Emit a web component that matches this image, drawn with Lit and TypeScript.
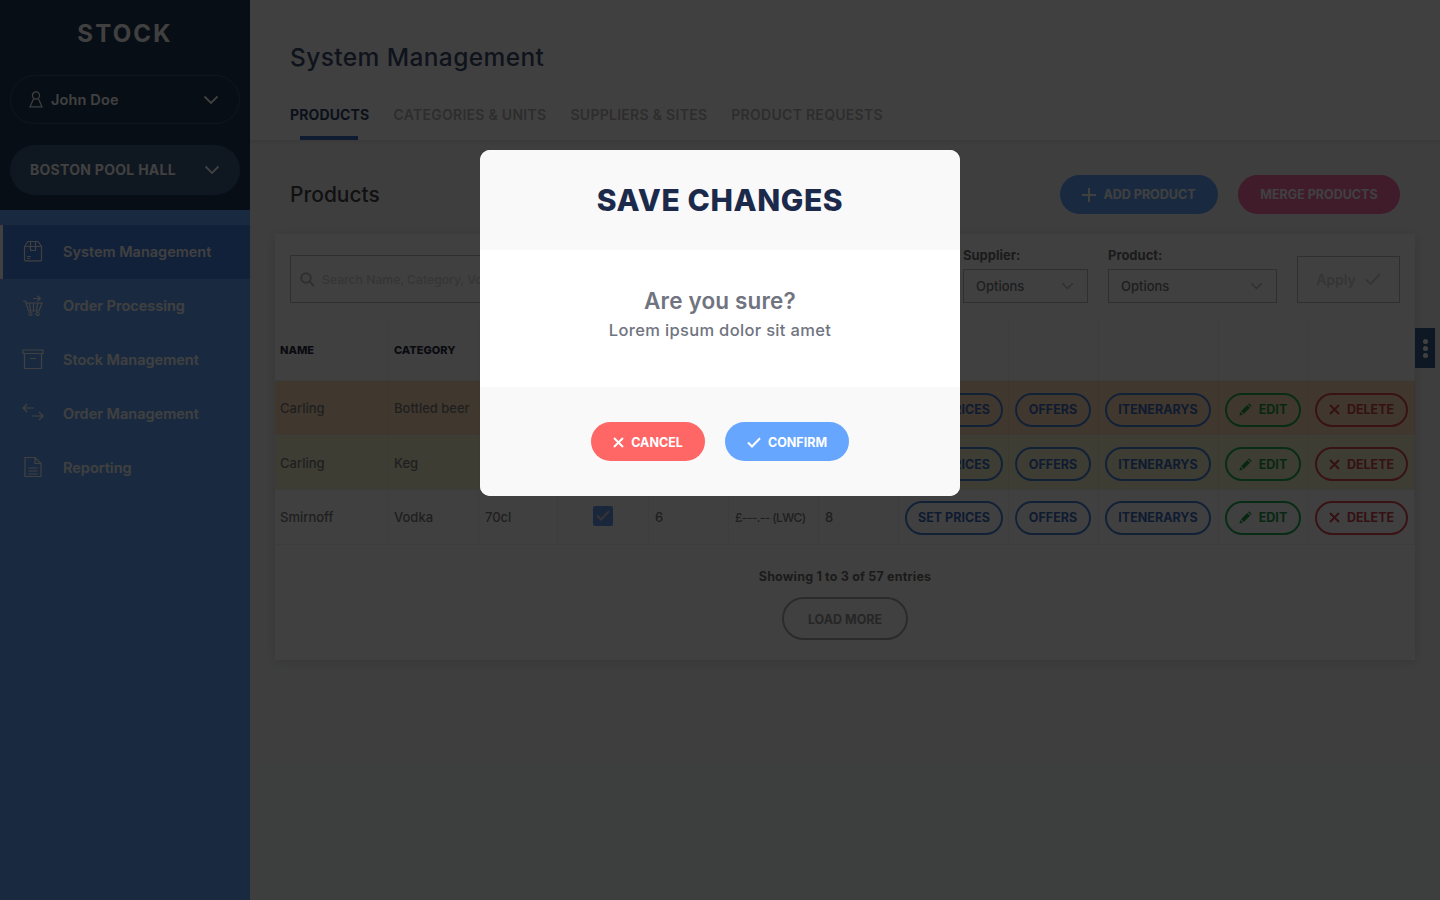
import { LitElement, html, css, svg } from "lit";
import { customElement } from "lit/decorators.js";

const chev = (w = 16) => html`<svg class="chev" width=${w} height=${w * 0.625} viewBox="0 0 16 10" fill="none" stroke="currentColor" stroke-width="1.8"><path d="M1.5 1.5 8 8l6.5-6.5"/></svg>`;
const xIcon = html`<svg class="ic" width="11" height="11" viewBox="0 0 11 11" fill="none" stroke="currentColor" stroke-width="2"><path d="M1 1l9 9M10 1l-9 9"/></svg>`;
const checkIcon = html`<svg class="ic" width="14" height="11" viewBox="0 0 14 11" fill="none" stroke="currentColor" stroke-width="2"><path d="M1 5.5 5 9.5 13 1.2"/></svg>`;
const pencil = html`<svg class="ic" width="13" height="13" viewBox="0 0 13 13" fill="currentColor"><path d="M0.5 12.5 1.2 9 4 11.8zM2 8.2 8.2 2 11 4.8 4.8 11zM9 1.2 10 .3l2.7 2.7-1 1z"/></svg>`;

const navIcons = [
  svg`<path d="M2.5 6.5 6 1.5h10l3.5 5V20a.8.8 0 0 1-.8.8H3.3a.8.8 0 0 1-.8-.8zM2.5 6.5h17M8.5 1.5v9h5v-9M5 16.5h4M5 18.5h3"/>`,
  svg`<path d="M1 7h2.5l3 10h10.5l3-8H4.5M7.5 9.5l1 7.5M11.5 9.5V17M15.5 9.5l-1 7.5M11 4.5h7M15.5 1.8l2.8 2.7-2.8 2.7"/><circle cx="8.5" cy="20" r="1.5"/><circle cx="15.5" cy="20" r="1.5"/>`,
  svg`<path d="M1 2h20v3.5H1zM2.5 6v14.5h17V6M8 10.5h6"/>`,
  svg`<path d="M1 6h11M5 2 1 6l4 4M10 14h11M17 10l4 4-4 4"/>`,
  svg`<path d="M3 1.5h10l6 6V20.5H3zM13 1.5v6h6M6.5 12h9M6.5 15h9M6.5 18h9"/>`,
];
const nav = ["System Management", "Order Processing", "Stock Management", "Order Management", "Reporting"];
const tabs = ["PRODUCTS", "CATEGORIES & UNITS", "SUPPLIERS & SITES", "PRODUCT REQUESTS"];
const heads = ["NAME", "CATEGORY", "VOLUME", "ACTIVE", "STOCK", "PRICE", "SITES"];
const rows = [
  { tone: "orange", name: "Carling", cat: "Bottled beer" },
  { tone: "yellow", name: "Carling", cat: "Keg" },
  { tone: "plain", name: "Smirnoff", cat: "Vodka" },
];

@customElement("app-root")
export class AppRoot extends LitElement {
  static styles = css`
    :host { display: block; width: 1440px; height: 900px; overflow: hidden; position: relative;
      font-family: Inter, "Noto Sans", sans-serif; color: #999; background: #f5f6f9; }
    * { box-sizing: border-box; }
    .app { display: flex; height: 900px; }
    .side { width: 250px; flex: none; background: #66a6ff; color: #fff; }
    .side-top { height: 210px; background: #203853; padding: 21px 10px 0; }
    .brand { text-align: center; font-size: 24px; line-height: 26px; font-weight: 700; letter-spacing: 0.09em; margin-bottom: 28px; color: #fff; }
    .pill { height: 49px; border-radius: 25px; display: flex; align-items: center; justify-content: space-between; }
    .user { border: 1px solid #41597a; padding: 0 20px 0 18px; font-size: 14.5px; font-weight: 600; }
    .user span { display: flex; align-items: center; gap: 8px; letter-spacing: .01em; }
    .site { height: 50px; margin-top: 21px; background: #3f5b82; padding: 0 20px 1px; font-size: 14px; font-weight: 700; letter-spacing: .02em; }
    nav { padding-top: 15px; }
    .nav-item { height: 54px; display: flex; align-items: center; padding: 0 0 2px 22px; gap: 19px; font-size: 14.5px; font-weight: 600; }
    .nav-item.on { background: #4682e6; border-left: 3px solid #fff; padding-left: 19px; }
    .nav-item svg { flex: none; fill: none; stroke: #fff; stroke-width: 1.2; }
    main { flex: 1; min-width: 0; }
    header { height: 140px; background: #fff; padding: 42px 40px 0; box-shadow: 0 2px 4px rgba(0,0,0,.08); }
    h1 { margin: 0; font-size: 24.5px; line-height: 30px; font-weight: 500; color: #3c4c70; letter-spacing: .016em; }
    .tabs { display: flex; gap: 24px; margin-top: 28px; font-size: 14px; font-weight: 600; line-height: 30px; color: #b4b4b4; letter-spacing: .02em; }
    .tab { position: relative; height: 40px; }
    .tab.on { color: #2e4468; font-weight: 700; letter-spacing: .01em; }
    .tab.on::after { content: ""; position: absolute; left: 10px; right: 11px; bottom: 0; height: 4px; background: #3d6cc0; }
    .bar { height: 94px; display: flex; align-items: center; padding: 14px 40px 0; gap: 20px; }
    h2 { margin: 0 auto 0 0; font-size: 21px; font-weight: 500; color: #444; padding-top: 1px; }
    .btn { height: 39px; border-radius: 20px; display: flex; align-items: center; justify-content: center; gap: 7px; padding-top: 1px; font-size: 12.5px; font-weight: 700; color: #fff; }
    .add { width: 158px; background: #65a8ff; }
    .merge { width: 162px; background: #ff6ca8; }
    .card { margin: 0 25px; background: #fff; box-shadow: 0 2px 10px rgba(0,0,0,.12); }
    .filters { height: 85px; display: flex; align-items: flex-end; padding: 0 15px 16px; gap: 20px; font-size: 13px; }
    .search { flex: 1; height: 48px; border: 1px solid #bbb; display: flex; align-items: center; gap: 7px; padding: 0 9px; font-size: 12.2px; color: #d4d4d4; font-weight: 500; white-space: nowrap; overflow: hidden; }
    .field { display: flex; flex-direction: column; gap: 6px; color: #6e6e6e; font-weight: 700; line-height: 15px; }
    .sel { height: 34px; border: 1px solid #bbb; display: flex; align-items: center; justify-content: space-between; padding: 0 13px 0 12px; font-weight: 500; color: #777; }
    .sel .chev { color: #bbb; }
    .s1 { width: 125px; }
    .s2 { width: 169px; }
    .apply { width: 103px; height: 47px; border: 1px solid #bbb; display: flex; align-items: center; justify-content: center; gap: 9px; font-size: 14px; font-weight: 600; color: #d4d4d4; }
    .tr { display: grid; grid-template-columns: 113px 91px 79px 91px 80px 90px 80px 110px 90px 120px 90px 106px; border-bottom: 1px solid #f0f0f0; font-size: 13px; }
    .head { height: 62px; font-size: 11px; font-weight: 800; color: #2b2f45; }
    .r0 { height: 55px; background: #ffdcb8; }
    .r1 { height: 54px; background: #f3f2d0; }
    .r2 { height: 55px; }
    .c { display: flex; align-items: center; padding: 0 5px 0 6px; border-right: 1px solid rgba(0,0,0,.05); font-weight: 500; color: #7c7c7c; white-space: nowrap; min-width: 0; }
    .c:first-child { padding-left: 5px; }
    .head .c { color: #2b2f45; font-weight: 800; }
    .c.cb { justify-content: center; padding: 0 6px; }
    .c.price { font-size: 12px; letter-spacing: -0.6px; }
    .box { width: 20px; height: 20px; border-radius: 2px; background: #6a96f0; color: #d0d0d0; display: flex; align-items: center; justify-content: center; margin-bottom: 3px; }
    .act { height: 34px; border: 2px solid; border-radius: 17px; display: flex; align-items: center; justify-content: center; gap: 7px; font-size: 12.5px; font-weight: 700; margin-top: 3px; }
    .r2 .act { margin-top: 1px; }
    .blue { color: #3f6cc0; border-color: #4c84d8; }
    .green { color: #1e9d4c; border-color: #23b055; }
    .red { color: #d2434f; border-color: #de4a56; }
    .w99 { width: 99px; } .w76 { width: 76px; } .w106 { width: 106px; } .w93 { width: 93px; }
    .foot { height: 115px; display: flex; flex-direction: column; align-items: center; padding-top: 23px; font-size: 12.5px; font-weight: 700; letter-spacing: .015em; color: #6e6e6e; }
    .foot div { line-height: 17px; }
    .more { width: 126px; height: 43px; border: 2px solid #aaa; border-radius: 22px; margin-top: 12px; padding-top: 1px; display: flex; align-items: center; justify-content: center; font-size: 12.5px; font-weight: 700; letter-spacing: 0; color: #999; }
    .handle { position: absolute; left: 1415px; top: 328px; width: 20px; height: 40px; background: #385f8e; display: flex; flex-direction: column; align-items: center; justify-content: center; gap: 2px; }
    .handle i { width: 5px; height: 5px; border-radius: 50%; background: #fff; }
    .overlay { position: absolute; inset: 0; background: rgba(0,0,0,.75); display: flex; justify-content: center; align-items: flex-start; padding-top: 150px; }
    .modal { width: 480px; height: 346px; border-radius: 10px; overflow: hidden; background: #fff; display: flex; flex-direction: column; }
    .m-head { height: 100px; background: #f9f9f9; display: flex; align-items: center; justify-content: center; font-size: 30px; font-weight: 800; letter-spacing: .02em; color: #1b2a4a; }
    .m-body { height: 137px; display: flex; flex-direction: column; align-items: center; padding-top: 36px; color: #6f7480; }
    .m-q { font-size: 22.5px; line-height: 30px; font-weight: 600; letter-spacing: .007em; }
    .m-t { font-size: 16.5px; line-height: 28px; font-weight: 500; letter-spacing: .02em; }
    .m-foot { flex: 1; background: #f9f9f9; display: flex; justify-content: center; gap: 20px; padding-top: 35px; }
    .cancel { width: 114px; background: #ff6666; }
    .confirm { width: 124px; background: #66a6ff; }
  `;

  private actions() {
    return html`
      <div class="c"><div class="act blue w99">SET PRICES</div></div>
      <div class="c"><div class="act blue w76">OFFERS</div></div>
      <div class="c"><div class="act blue w106">ITENERARYS</div></div>
      <div class="c"><div class="act green w76">${pencil}EDIT</div></div>
      <div class="c"><div class="act red w93">${xIcon}DELETE</div></div>`;
  }

  render() {
    return html`
      <div class="app">
        <aside class="side">
          <div class="side-top">
            <div class="brand">STOCK</div>
            <div class="pill user">
              <span><svg width="14" height="17" viewBox="0 0 14 17" fill="none" stroke="currentColor" stroke-width="1.2"><circle cx="7" cy="4.5" r="3.6"/><path d="M4.5 8 1 15.8h12L9.5 8"/></svg>John Doe</span>
              ${chev()}
            </div>
            <div class="pill site"><span>BOSTON POOL HALL</span>${chev()}</div>
          </div>
          <nav>
            ${nav.map((n, i) => html`<div class="nav-item ${i === 0 ? "on" : ""}"><svg width="22" height="22" viewBox="0 0 22 22">${navIcons[i]}</svg>${n}</div>`)}
          </nav>
        </aside>
        <main>
          <header>
            <h1>System Management</h1>
            <div class="tabs">${tabs.map((t, i) => html`<div class="tab ${i === 0 ? "on" : ""}">${t}</div>`)}</div>
          </header>
          <div class="bar">
            <h2>Products</h2>
            <div class="btn add"><svg width="14" height="14" viewBox="0 0 14 14" stroke="currentColor" stroke-width="2"><path d="M7 0v14M0 7h14"/></svg>ADD PRODUCT</div>
            <div class="btn merge">MERGE PRODUCTS</div>
          </div>
          <section class="card">
            <div class="filters">
              <div class="search"><svg width="15" height="15" viewBox="0 0 15 15" fill="none" stroke="#bbb" stroke-width="2"><circle cx="6" cy="6" r="4.8"/><path d="M9.5 9.5 14 14"/></svg>Search Name, Category, Volume</div>
              <div class="field">Supplier:<div class="sel s1">Options${chev(13)}</div></div>
              <div class="field">Product:<div class="sel s2">Options${chev(13)}</div></div>
              <div class="apply">Apply<svg width="16" height="13" viewBox="0 0 16 13" fill="none" stroke="currentColor" stroke-width="2"><path d="M1 6.5 5.5 11 15 1"/></svg></div>
            </div>
            <div class="tr head">
              ${heads.map((h) => html`<div class="c">${h}</div>`)}
              <div class="c"></div><div class="c"></div><div class="c"></div><div class="c"></div><div class="c"></div>
            </div>
            ${rows.map((r, i) => html`
              <div class="tr r${i}">
                <div class="c">${r.name}</div>
                <div class="c">${r.cat}</div>
                <div class="c">70cl</div>
                <div class="c cb"><div class="box">${checkIcon}</div></div>
                <div class="c">6</div>
                <div class="c price">£---.-- (LWC)</div>
                <div class="c">8</div>
                ${this.actions()}
              </div>`)}
            <div class="foot">
              <div>Showing 1 to 3 of 57 entries</div>
              <div class="more">LOAD MORE</div>
            </div>
          </section>
        </main>
      </div>
      <div class="handle"><i></i><i></i><i></i></div>
      <div class="overlay">
        <div class="modal">
          <div class="m-head">SAVE CHANGES</div>
          <div class="m-body">
            <div class="m-q">Are you sure?</div>
            <div class="m-t">Lorem ipsum dolor sit amet</div>
          </div>
          <div class="m-foot">
            <div class="btn cancel">${xIcon}CANCEL</div>
            <div class="btn confirm">${checkIcon}CONFIRM</div>
          </div>
        </div>
      </div>
    `;
  }
}
